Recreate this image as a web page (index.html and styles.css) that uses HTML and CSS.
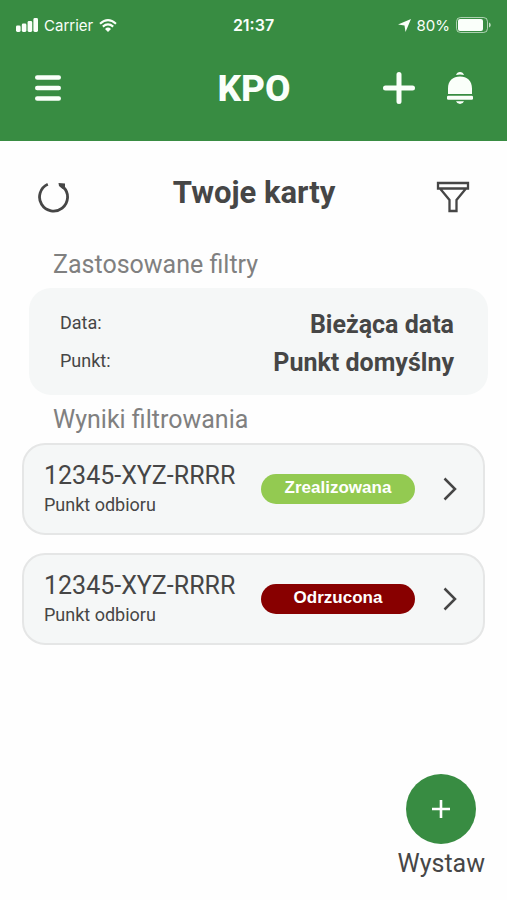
FILE: index.html
```html
<!DOCTYPE html>
<html lang="pl">
<head>
<meta charset="utf-8">
<meta name="viewport" content="width=device-width, initial-scale=1">
<title>KPO</title>
<link rel="stylesheet" href="styles.css">
</head>
<body>
<header class="top">
  <div class="status">
    <div class="status-side">
      <svg width="22" height="14" viewBox="0 0 22 14" fill="currentColor" aria-hidden="true"><rect x="0" y="7.500" width="4.600" height="6.500" rx="1.400"/><rect x="5.800" y="5.500" width="4.600" height="8.500" rx="1.400"/><rect x="11.600" y="3" width="4.600" height="11" rx="1.400"/><rect x="17.400" y="0" width="4.600" height="14" rx="1.400"/></svg>
      <span class="carrier">Carrier</span>
      <svg width="18" height="13" viewBox="0 0 18 13" aria-hidden="true"><path d="M1 4.700Q9-2.300 17 4.700M3.800 7.600Q9 3.200 14.200 7.600" fill="none" stroke="currentColor" stroke-width="2.100"/><path d="M6 10Q9 7.200 12 10L9 13Z" fill="currentColor"/></svg>
    </div>
    <span class="clock">21:37</span>
    <div class="status-side status-end">
      <svg width="13" height="13" viewBox="0 0 13 13" fill="currentColor" aria-hidden="true"><path d="M13 0 7.500 13 6.500 6.500 0 5.500Z"/></svg>
      <span class="charge">80%</span>
      <svg width="35" height="16" viewBox="0 0 35 16" aria-hidden="true"><rect x=".5" y=".5" width="31" height="15" rx="4" fill="none" stroke="currentColor" stroke-opacity=".6"/><rect x="2" y="2" width="25" height="12" rx="2" fill="currentColor"/><path d="M33 5.500c2.300.8 2.300 4.200 0 5Z" fill="currentColor" fill-opacity=".7"/></svg>
    </div>
  </div>
  <div class="bar">
    <button class="icon-btn" aria-label="Menu"><svg width="26" height="26" viewBox="0 0 26 26" stroke="currentColor" stroke-width="4.400" stroke-linecap="round"><path d="M2.200 2.500H23.800M2.200 13H23.800M2.200 23.500H23.800"/></svg></button>
    <h1 class="brand">KPO</h1>
    <div class="actions">
      <button class="icon-btn" aria-label="Dodaj"><svg width="32" height="32" viewBox="0 0 32 32" stroke="currentColor" stroke-width="5" stroke-linecap="round"><path d="M2.500 16H29.500M16 2.500V29.500"/></svg></button>
      <button class="icon-btn" aria-label="Powiadomienia"><svg width="26" height="32" viewBox="0 0 26 32" fill="currentColor"><path d="M9 3Q10 0 13 0T17 3Q13 1.800 9 3ZM1 22V16.500C1 8.500 6 4.500 13 4.500S25 8.500 25 16.500V22ZM9 29.300H17Q16 32 13 32T9 29.300Z"/><rect x="0" y="23.700" width="26" height="4" rx="1.300"/></svg></button>
    </div>
  </div>
</header>
<main class="content">
  <div class="heading">
    <button class="icon-btn" aria-label="Odśwież"><svg width="32" height="32" viewBox="0 0 32 32" fill="none" stroke="currentColor" stroke-width="2.800"><path d="M9.800 3.300A14 14 0 1 0 25.500 6.200"/><path d="M20.500 2 27 2.500V9L24 7.500 21 5Z" fill="currentColor" stroke="none"/></svg></button>
    <h2 class="title">Twoje karty</h2>
    <button class="icon-btn" aria-label="Filtruj"><svg width="34" height="32" viewBox="0 0 34 32" fill="none" stroke="currentColor" stroke-width="2.300"><path d="M2 2H32V7.500H2ZM4 7.500 13.500 19V30H20.500V19L30 7.500"/></svg></button>
  </div>
  <h3 class="label">Zastosowane filtry</h3>
  <dl class="filters">
    <div class="filter"><dt>Data:</dt><dd>Bieżąca data</dd></div>
    <div class="filter"><dt>Punkt:</dt><dd>Punkt domyślny</dd></div>
  </dl>
  <h3 class="label">Wyniki filtrowania</h3>
  <div class="cards">
    <a class="card" href="#">
      <span class="info"><span class="number">12345-XYZ-RRRR</span><span class="point">Punkt odbioru</span></span>
      <span class="badge done">Zrealizowana</span>
      <svg class="chevron" width="14" height="24" viewBox="0 0 14 24" fill="none" stroke="currentColor" stroke-width="2.500"><path d="M1.500 1.500 12 12 1.500 22.500"/></svg>
    </a>
    <a class="card" href="#">
      <span class="info"><span class="number">12345-XYZ-RRRR</span><span class="point">Punkt odbioru</span></span>
      <span class="badge rejected">Odrzucona</span>
      <svg class="chevron" width="14" height="24" viewBox="0 0 14 24" fill="none" stroke="currentColor" stroke-width="2.500"><path d="M1.500 1.500 12 12 1.500 22.500"/></svg>
    </a>
  </div>
  <button class="issue">
    <span class="circle"><svg width="20" height="20" viewBox="0 0 20 20" stroke="currentColor" stroke-width="2.600"><path d="M1 10H19M10 1V19"/></svg></span>
    <span>Wystaw</span>
  </button>
</main>
</body>
</html>
```
FILE: styles.css
```css
* { box-sizing: border-box; }

body {
  margin: 0;
  min-height: 100vh;
  display: flex;
  flex-direction: column;
  background: #fefefe;
  color: #464646;
  font-family: Roboto, "Liberation Sans", sans-serif;
}

h1, h2, h3, dl, dd { margin: 0; }

button {
  padding: 0;
  border: 0;
  background: none;
  color: inherit;
  font: inherit;
  cursor: pointer;
}

svg { display: block; flex: none; }

.top {
  padding-bottom: 15px;
  background: #388c42;
  color: #fafffa;
}

.status {
  display: grid;
  grid-template-columns: 1fr auto 1fr;
  align-items: center;
  height: 50px;
  padding: 0 16px;
  font-family: Inter, Roboto, sans-serif;
  font-size: 16px;
}

.status-side { display: flex; align-items: center; gap: 6px; font-size: 15px; }
.status-end { justify-content: flex-end; }
.clock { font-weight: 600; }

.bar {
  display: grid;
  grid-template-columns: 1fr auto 1fr;
  align-items: center;
  height: 76px;
  padding: 0 34px 0 35px;
}

.icon-btn { justify-self: start; }
.brand { font-size: 37px; font-weight: 800; line-height: 44px; padding-top: 2px; }
.actions { display: flex; justify-content: flex-end; gap: 32px; }

.content {
  flex: 1;
  display: flex;
  flex-direction: column;
  padding: 28px 22px 16px;
}

.heading {
  display: grid;
  grid-template-columns: 1fr auto 1fr;
  align-items: center;
  height: 56px;
  padding: 0 15px 0 16px;
}

.heading .icon-btn:last-child { justify-self: end; }
.title { font-size: 31px; font-weight: 700; line-height: 40px; padding-bottom: 8px; }

.label {
  padding: 2px 31px 0;
  color: #808080;
  font-size: 25px;
  font-weight: 400;
  line-height: 46px;
}

.heading + .label { margin-top: 15px; }

.filters {
  margin: 0 -3px 0 7px;
  padding: 19px 34px 12px 31px;
  border-radius: 22px;
  background: #f5f7f7;
}

.filter { display: flex; justify-content: space-between; height: 38px; line-height: 36px; }
.filter dt { font-size: 18px; line-height: 32px; }
.filter dd { font-size: 25px; font-weight: 700; }

.cards { display: grid; gap: 18px; }

.card {
  display: flex;
  align-items: center;
  height: 92px;
  padding: 0 26px 0 20px;
  border: 2px solid #e5e6e6;
  border-radius: 23px;
  background: #f5f7f7;
  color: inherit;
  text-decoration: none;
}

.info { flex: 1; display: grid; padding-top: 2px; }
.number { font-size: 25px; line-height: 30px; }
.point { font-size: 18px; line-height: 28px; }

.badge {
  flex: none;
  width: 154px;
  height: 30px;
  border-radius: 15px;
  color: #fff;
  font-family: "Liberation Sans", sans-serif;
  font-size: 17px;
  font-weight: 700;
  line-height: 28px;
  text-align: center;
}

.done { background: #93ca51; }
.rejected { background: #880000; }
.chevron { margin-left: 28px; }

.issue {
  display: grid;
  justify-items: center;
  align-self: flex-end;
  margin-top: auto;
  font-size: 25px;
  line-height: 40px;
}

.circle {
  display: grid;
  place-items: center;
  width: 70px;
  height: 70px;
  border-radius: 50%;
  background: #388c42;
  color: #fff;
}
```
